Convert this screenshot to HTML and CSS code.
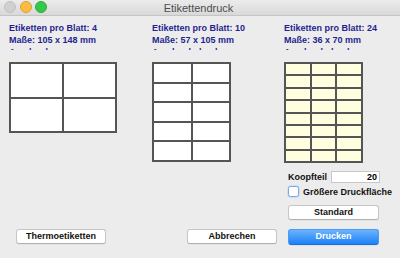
FILE: index.html
```html
<!DOCTYPE html>
<html>
<head>
<meta charset="utf-8">
<link rel="stylesheet" href="styles.css">
</head>
<body>
<div class="window">
  <div class="titlebar">
    <div class="lights">
      <span class="light gray"></span>
      <span class="light yellow"></span>
      <span class="light green"></span>
    </div>
    <div class="title">Etikettendruck</div>
  </div>
  <div class="columns">
    <div class="col col1">
      <div class="info">
        <div>Etiketten pro Blatt: 4</div>
        <div>Maße: 105 x 148 mm</div>
        <div>Ausdruck: quer</div>
      </div>
      <div class="sheet sheet1">
        <i></i><i></i><i></i><i></i>
      </div>
    </div>
    <div class="col col2">
      <div class="info">
        <div>Etiketten pro Blatt: 10</div>
        <div>Maße: 57 x 105 mm</div>
        <div>Ausdruck: hoch</div>
      </div>
      <div class="sheet sheet2">
        <i></i><i></i><i></i><i></i><i></i><i></i><i></i><i></i><i></i><i></i>
      </div>
    </div>
    <div class="col col3">
      <div class="info">
        <div>Etiketten pro Blatt: 24</div>
        <div>Maße: 36 x 70 mm</div>
        <div>Ausdruck: hoch</div>
      </div>
      <div class="sheet sheet3">
        <i></i><i></i><i></i><i></i><i></i><i></i><i></i><i></i><i></i><i></i><i></i><i></i>
        <i></i><i></i><i></i><i></i><i></i><i></i><i></i><i></i><i></i><i></i><i></i><i></i>
      </div>
      <div class="field-row">
        <span class="label">Koopfteil</span>
        <span class="input">20</span>
      </div>
      <div class="check-row">
        <span class="checkbox"></span>
        <span class="label">Größere Druckfläche</span>
      </div>
      <div class="btn btn-standard">Standard</div>
    </div>
  </div>
  <div class="footer">
    <div class="btn btn-thermo">Thermoetiketten</div>
    <div class="btn btn-cancel">Abbrechen</div>
    <div class="btn btn-primary">Drucken</div>
  </div>
</div>
</body>
</html>
```
FILE: styles.css
```css
* { box-sizing: border-box; }
html, body { margin: 0; padding: 0; }
body {
  width: 400px;
  height: 258px;
  overflow: hidden;
  font-family: "Liberation Sans", Arial, sans-serif;
  background: #ececec;
}
.window {
  width: 400px;
  height: 258px;
  background: #ececec;
}
.titlebar {
  height: 16px;
  position: relative;
  background: linear-gradient(#ebebeb, #d9d9d9);
  border-bottom: 1px solid #c4c4c4;
  display: flex;
  align-items: center;
  justify-content: center;
}
.lights {
  position: absolute;
  left: 4px;
  top: 1px;
  display: flex;
  gap: 3.5px;
}
.light {
  width: 12px;
  height: 12px;
  border-radius: 50%;
  display: block;
}
.light.gray { background: #d0d0d0; border: 1px solid #c0c0c0; }
.light.yellow { background: #fdbc40; border: 1px solid #e0a030; }
.light.green { background: #34c84a; border: 1px solid #2aac3c; }
.title {
  font-size: 11px;
  color: #4d4d4d;
  margin-left: -3px;
}
.columns {
  display: grid;
  grid-template-columns: 143px 132px 116px;
  padding-left: 9px;
}
.info {
  margin-top: 6px;
  height: 28px;
  overflow: hidden;
  font-size: 9px;
  line-height: 12px;
  font-weight: bold;
  color: #1f1f8f;
  white-space: nowrap;
}
.sheet {
  margin-top: 12px;
  display: grid;
  background: #555;
  gap: 2px;
  padding: 2px;
}
.sheet i { display: block; background: #fff; }
.sheet1 {
  width: 108px;
  height: 71px;
  grid-template-columns: 1fr 1fr;
  grid-template-rows: 1fr 1fr;
}
.sheet2 {
  width: 79px;
  height: 100px;
  grid-template-columns: 1fr 1fr;
  grid-template-rows: repeat(5, 1fr);
}
.sheet3 {
  width: 79px;
  height: 101px;
  grid-template-columns: 1fr 1fr 1fr;
  grid-template-rows: repeat(8, 1fr);
}
.sheet3 i { background: #ffffe0; }
.field-row {
  margin-top: 8px;
  margin-left: 4px;
  display: flex;
  align-items: center;
  height: 12px;
}
.label {
  font-size: 9px;
  font-weight: bold;
  color: #111;
  white-space: nowrap;
}
.field-row .label { width: 43px; flex-shrink: 0; }
.input {
  width: 49px;
  height: 12px;
  flex-shrink: 0;
  background: #fff;
  border: 1px solid #c8c8c8;
  font-size: 9px;
  font-weight: bold;
  text-align: right;
  line-height: 10px;
  padding-right: 2px;
}
.check-row {
  margin-top: 3px;
  margin-left: 4px;
  display: flex;
  align-items: center;
  gap: 4px;
  height: 11px;
}
.checkbox {
  width: 11px;
  height: 11px;
  flex-shrink: 0;
  border-radius: 2.5px;
  border: 1px solid #7aa7e6;
  background: #fff;
  box-shadow: 0 0 0 0.5px #b9d2f4;
}
.btn {
  height: 15px;
  background: #fff;
  border: 1px solid #c6c6c6;
  border-bottom-color: #b3b3b3;
  border-radius: 3px;
  font-size: 9px;
  font-weight: bold;
  color: #111;
  text-align: center;
  line-height: 13px;
  box-shadow: 0 0.5px 0.5px rgba(0,0,0,0.08);
}
.btn-standard {
  margin-top: 8px;
  margin-left: 4px;
  width: 91px;
}
.footer {
  margin-top: 9px;
  display: flex;
  padding-left: 16px;
}
.btn-thermo { width: 90px; }
.btn-cancel { width: 90px; margin-left: 81px; }
.btn-primary {
  width: 91px;
  margin-left: 11px;
  height: 16px;
  background: linear-gradient(#6cb3fa, #1b81f9);
  border: 1px solid #4a98f7;
  border-bottom-color: #1a6fe0;
  color: #fff;
}
```
